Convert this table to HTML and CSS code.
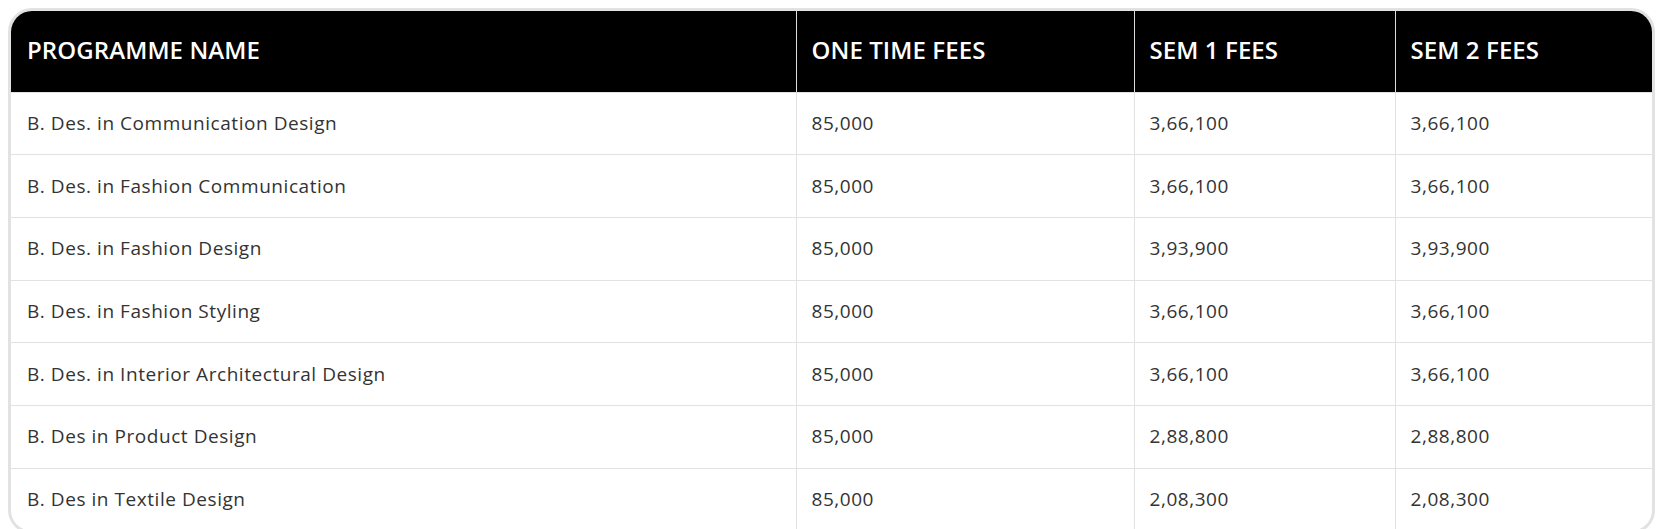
FILE: index.html
```html
<!DOCTYPE html>
<html lang="en">
<head>
<meta charset="utf-8">
<title>Fee Structure</title>
<link rel="stylesheet" href="styles.css">
</head>
<body>
<div class="fees-wrap">
  <table class="fees">
    <colgroup>
      <col class="c-name">
      <col class="c-one">
      <col class="c-sem1">
      <col class="c-sem2">
    </colgroup>
    <thead>
      <tr>
        <th>PROGRAMME NAME</th>
        <th>ONE TIME FEES</th>
        <th>SEM 1 FEES</th>
        <th>SEM 2 FEES</th>
      </tr>
    </thead>
    <tbody>
      <tr><td>B. Des. in Communication Design</td><td>85,000</td><td>3,66,100</td><td>3,66,100</td></tr>
      <tr><td>B. Des. in Fashion Communication</td><td>85,000</td><td>3,66,100</td><td>3,66,100</td></tr>
      <tr><td>B. Des. in Fashion Design</td><td>85,000</td><td>3,93,900</td><td>3,93,900</td></tr>
      <tr><td>B. Des. in Fashion Styling</td><td>85,000</td><td>3,66,100</td><td>3,66,100</td></tr>
      <tr><td>B. Des. in Interior Architectural Design</td><td>85,000</td><td>3,66,100</td><td>3,66,100</td></tr>
      <tr><td>B. Des in Product Design</td><td>85,000</td><td>2,88,800</td><td>2,88,800</td></tr>
      <tr><td>B. Des in Textile Design</td><td>85,000</td><td>2,08,300</td><td>2,08,300</td></tr>
    </tbody>
  </table>
</div>
</body>
</html>
```

FILE: styles.css
```css
html, body {
  margin: 0;
  padding: 0;
  background: #ffffff;
}

body {
  padding: 8px;
  font-family: "Open Sans", "Liberation Sans", sans-serif;
}

.fees-wrap {
  border: 3px solid #e2e2e2;
  border-radius: 24px;
  overflow: hidden;
}

.fees {
  width: 100%;
  table-layout: fixed;
  border-collapse: collapse;
  border-spacing: 0;
}

.c-name { width: 785px; }
.c-one { width: 338px; }
.c-sem1 { width: 261px; }
.c-sem2 { width: 257px; }

.fees th {
  background: #000000;
  color: #ffffff;
  font-weight: 600;
  font-size: 24px;
  letter-spacing: 0.1px;
  text-align: left;
  height: 81px;
  padding: 0 15px 3px;
  box-sizing: border-box;
  border-left: 1px solid #dcdcdc;
}

.fees td {
  color: #333333;
  font-weight: 400;
  font-size: 19px;
  letter-spacing: 0.55px;
  text-align: left;
  height: 62.7px;
  padding: 0 15px 1px;
  box-sizing: border-box;
  border-left: 1px solid #e2e2e2;
  border-top: 1px solid #e2e2e2;
}

.fees th:first-child,
.fees td:first-child {
  border-left: none;
  padding-left: 16px;
}
```
